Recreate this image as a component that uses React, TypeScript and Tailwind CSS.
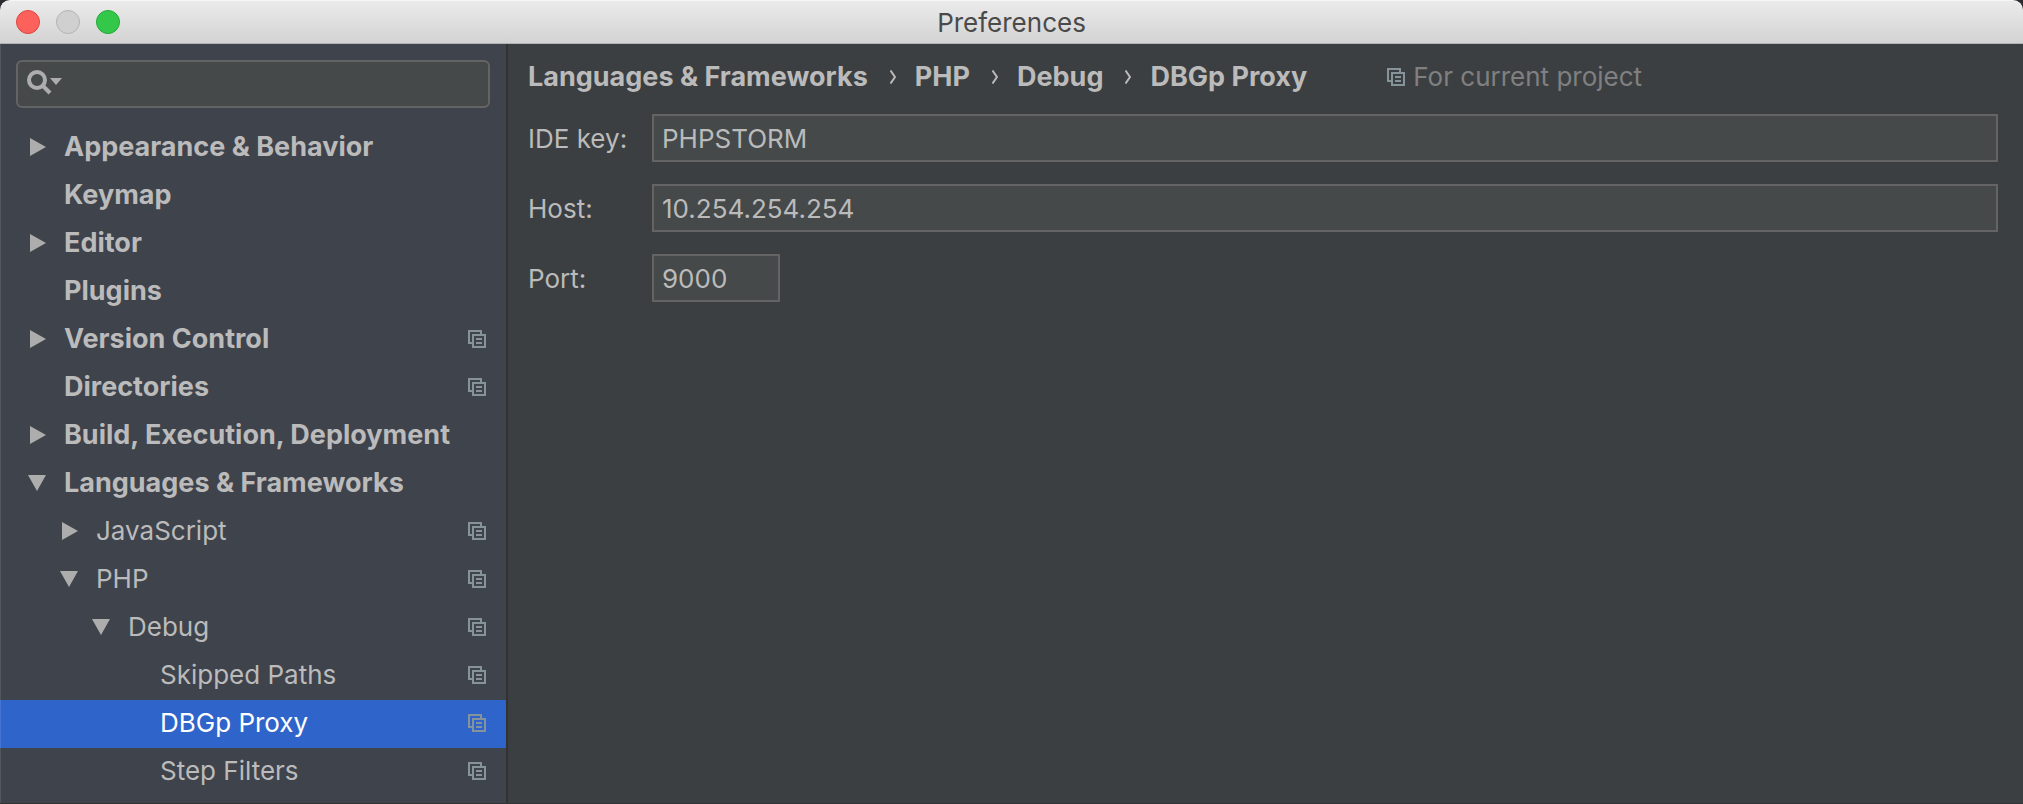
import { useState } from "react";

type Item = {
  label: string;
  level: number;
  state?: "open" | "closed";
  project?: boolean;
};

const items: Item[] = [
  { label: "Appearance & Behavior", level: 0, state: "closed" },
  { label: "Keymap", level: 0 },
  { label: "Editor", level: 0, state: "closed" },
  { label: "Plugins", level: 0 },
  { label: "Version Control", level: 0, state: "closed", project: true },
  { label: "Directories", level: 0, project: true },
  { label: "Build, Execution, Deployment", level: 0, state: "closed" },
  { label: "Languages & Frameworks", level: 0, state: "open" },
  { label: "JavaScript", level: 1, state: "closed", project: true },
  { label: "PHP", level: 1, state: "open", project: true },
  { label: "Debug", level: 2, state: "open", project: true },
  { label: "Skipped Paths", level: 3, project: true },
  { label: "DBGp Proxy", level: 3, project: true },
  { label: "Step Filters", level: 3, project: true },
];

const indents = ["pl-7", "pl-[60px]", "pl-[92px]", "pl-[124px]"];

const path = ["Languages & Frameworks", "PHP", "Debug", "DBGp Proxy"];

function ProjectIcon({ className = "" }: { className?: string }) {
  return (
    <svg viewBox="0 0 18 18" className={`h-[18px] w-[18px] shrink-0 ${className}`} fill="#87939a" aria-hidden="true">
      <path d="M0 0H14V4H12V2H2V12H4V14H0Z" />
      <path fillRule="evenodd" d="M4 4H18V18H4ZM6 6V16H16V6Z" />
      <path d="M8 8H14V10H8ZM8 12H14V14H8Z" />
    </svg>
  );
}

function Disclosure({ state }: { state?: "open" | "closed" }) {
  return (
    <svg viewBox="0 0 18 18" className="h-[18px] w-[18px] shrink-0" fill="#adadad" aria-hidden="true">
      {state === "closed" && <path d="M2 0L18 9L2 18Z" />}
      {state === "open" && <path d="M0 1H18L9 17Z" />}
    </svg>
  );
}

function TreeRow({ item, selected, onSelect }: { item: Item; selected: boolean; onSelect: () => void }) {
  return (
    <li>
      <button
        type="button"
        onClick={onSelect}
        aria-current={selected ? "page" : undefined}
        className={`flex h-12 w-full items-center pr-5 pb-0.5 text-left ${indents[item.level]} ${
          item.level === 0 ? "text-[27px] font-bold" : ""
        } ${selected ? "bg-[#2f65ca] text-white" : "text-[#bbbbbb]"}`}
      >
        <Disclosure state={item.state} />
        <span className="ml-[18px] flex-1 whitespace-nowrap">{item.label}</span>
        {item.project && <ProjectIcon />}
      </button>
    </li>
  );
}

function Field({ id, label, value, short }: { id: string; label: string; value: string; short?: boolean }) {
  return (
    <div className="flex items-center">
      <label htmlFor={id} className="w-[124px] shrink-0 pt-0.5 whitespace-nowrap">
        {label}
      </label>
      <input
        id={id}
        type="text"
        defaultValue={value}
        className={`h-12 border-2 border-[#646464] bg-[#45494a] px-2 outline-none ${
          short ? "w-32" : "min-w-0 flex-1"
        }`}
      />
    </div>
  );
}

export default function App() {
  const [selected, setSelected] = useState("DBGp Proxy");

  return (
    <div className="flex min-h-screen flex-col bg-[#2b2b30] font-['Inter',sans-serif] text-[26px] leading-8 text-[#bbbbbb]">
      <header className="flex h-11 items-center rounded-t-[10px] border-t border-b border-t-[#f6f6f6] border-b-[#b0b4b4] bg-linear-to-b from-[#ebebeb] to-[#d3d3d3] px-4">
        <div className="flex flex-1 gap-4">
          <button type="button" aria-label="Close" className="h-6 w-6 rounded-full border border-[#e0443e] bg-[#fc615c]" />
          <button type="button" aria-label="Minimize" className="h-6 w-6 rounded-full border border-[#b4b4b4] bg-[#d0d0d0]" />
          <button type="button" aria-label="Zoom" className="h-6 w-6 rounded-full border border-[#20a935] bg-[#34c84a]" />
        </div>
        <h1 className="pt-0.5 text-[#4a4a4a]">Preferences</h1>
        <div className="flex-1" />
      </header>

      <div className="flex flex-1 border-b border-[#323334] bg-[#3c3f41]">
        <aside className="relative w-[508px] shrink-0 border-r-2 border-[#323232] bg-[#3f434c] pt-4 after:pointer-events-none after:absolute after:inset-y-0 after:left-0 after:w-px after:bg-white/10">
          <div className="mx-4 flex h-12 items-center rounded-md border-2 border-[#646464] bg-[#45494a] pb-1 pl-2">
            <svg viewBox="0 0 36 26" className="h-[26px] w-9 shrink-0" fill="none" aria-hidden="true">
              <circle cx="11" cy="11" r="8" stroke="#adadad" strokeWidth="4" />
              <path d="M16.5 16.5L24 24" stroke="#adadad" strokeWidth="4" />
              <path d="M24 9H36L30 16Z" fill="#adadad" />
            </svg>
            <input type="search" aria-label="Search settings" className="min-w-0 flex-1 bg-transparent px-2 outline-none" />
          </div>
          <nav aria-label="Settings" className="pt-4 pb-[7px]">
            <ul>
              {items.map((item) => (
                <TreeRow
                  key={item.label}
                  item={item}
                  selected={item.label === selected}
                  onSelect={() => setSelected(item.label)}
                />
              ))}
            </ul>
          </nav>
        </aside>

        <main className="min-w-0 flex-1 pt-[17px] pr-[25px] pl-5">
          <div className="flex h-8 items-center whitespace-nowrap">
            <ol className="flex items-center text-[27px] font-bold">
              {path.map((part, i) => (
                <li key={part} className="flex items-center">
                  {i > 0 && (
                    <svg viewBox="0 0 6 14" className="mr-[19px] ml-[22px] h-3.5 w-1.5" fill="none" stroke="#bbbbbb" strokeWidth="2" aria-hidden="true">
                      <path d="M0.5 0.5L5 7L0.5 13.5" />
                    </svg>
                  )}
                  {part}
                </li>
              ))}
            </ol>
            <ProjectIcon className="ml-20" />
            <span className="ml-2 text-[#808080]">For current project</span>
          </div>
          <form className="flex flex-col gap-[22px] pt-[21px]">
            <Field id="ide-key" label="IDE key:" value="PHPSTORM" />
            <Field id="host" label="Host:" value="10.254.254.254" />
            <Field id="port" label="Port:" value="9000" short />
          </form>
        </main>
      </div>
    </div>
  );
}
